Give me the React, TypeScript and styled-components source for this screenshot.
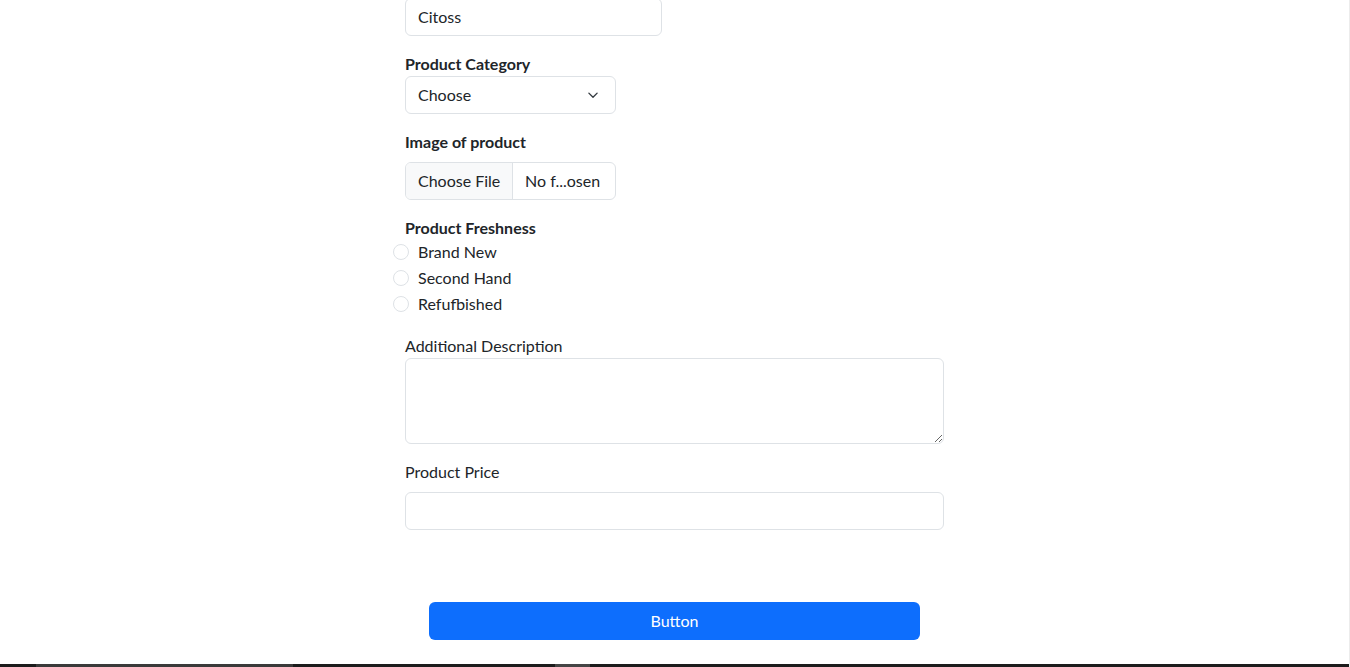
import React from "react";
import styled, { createGlobalStyle } from "styled-components";

const GlobalStyle = createGlobalStyle`
  html, body { margin: 0; padding: 0; height: 100%; background: #fff; }
  body {
    font-family: Lato, "Noto Sans", "Liberation Sans", sans-serif;
    font-size: 16px;
    line-height: 1.5;
    color: #212529;
    overflow: hidden;
  }
  *, *::before, *::after { box-sizing: border-box; }
`;

const Page = styled.div`
  height: 667px;
  display: flex;
  flex-direction: column;
  border-right: 1px solid #ececec;
  overflow: hidden;
`;

const Main = styled.main`
  flex: 1;
  display: flex;
  justify-content: center;
  overflow: hidden;
`;

const Form = styled.form`
  width: 539px;
  margin: -2px 0 0 0;
  display: flex;
  flex-direction: column;
`;

const Field = styled.div`
  display: flex;
  flex-direction: column;
  margin-bottom: 16px;
`;

const Label = styled.label<{ $bold?: boolean; $mb?: number }>`
  display: block;
  font-weight: ${(p) => (p.$bold ? 700 : 400)};
  line-height: 24px;
  margin-bottom: ${(p) => p.$mb ?? 0}px;
`;

const Control = styled.div<{ $width?: number; $height?: number }>`
  width: ${(p) => (p.$width ? `${p.$width}px` : "100%")};
  height: ${(p) => p.$height ?? 38}px;
  border: 1px solid #dee2e6;
  border-radius: 6px;
  background: #fff;
  padding: 6px 12px;
  line-height: 24px;
  display: flex;
  align-items: center;
`;

const SelectBox = styled(Control)`
  justify-content: space-between;
  padding-right: 14px;
`;

const TextArea = styled.textarea`
  display: block;
  width: 100%;
  height: 86px;
  border: 1px solid #dee2e6;
  border-radius: 6px;
  padding: 6px 12px;
  font: inherit;
  color: inherit;
  resize: vertical;
  outline: none;
`;

const FileBox = styled.div`
  width: 211px;
  height: 38px;
  border: 1px solid #dee2e6;
  border-radius: 6px;
  display: flex;
  overflow: hidden;
  line-height: 24px;
`;

const FileButton = styled.span`
  background: #f8f9fa;
  border-right: 1px solid #dee2e6;
  padding: 6px 12px;
  width: 107px;
  white-space: nowrap;
`;

const FileName = styled.span`
  padding: 6px 12px;
  white-space: nowrap;
`;

const RadioGroup = styled.div`
  display: flex;
  flex-direction: column;
  margin-left: -12px;
  margin-bottom: 16px;
`;

const RadioRow = styled.div`
  display: flex;
  align-items: center;
  height: 24px;
  margin-bottom: 2px;
`;

const RadioCircle = styled.span`
  width: 16px;
  height: 16px;
  border-radius: 50%;
  border: 1px solid #dee2e6;
  background: #fff;
  margin-right: 9px;
  flex-shrink: 0;
`;

const ButtonRow = styled.div`
  padding: 56px 24px 0;
`;

const PrimaryButton = styled.button`
  width: 100%;
  height: 38px;
  border: none;
  border-radius: 6px;
  background: #0d6efd;
  color: #fff;
  font: inherit;
  cursor: pointer;
`;

const Taskbar = styled.div`
  height: 3px;
  display: flex;
  background: #1c1c1c;
`;

const TaskSeg = styled.span<{ $w: number; $c: string }>`
  width: ${(p) => p.$w}px;
  background: ${(p) => p.$c};
  flex-shrink: 0;
`;

const Chevron = () => (
  <svg width="16" height="12" viewBox="0 0 16 16" fill="none">
    <path d="m2.5 5.5 5.5 5.5 5.5-5.5" stroke="#343a40" strokeWidth="1.8" strokeLinecap="round" strokeLinejoin="round" />
  </svg>
);

const radios = ["Brand New", "Second Hand", "Refufbished"];

export default function App() {
  return (
    <>
      <GlobalStyle />
      <Page>
        <Main>
          <Form onSubmit={(e) => e.preventDefault()}>
            <Field>
              <Control $width={257}>Citoss</Control>
            </Field>
            <Field>
              <Label $bold>Product Category</Label>
              <SelectBox $width={211}>
                <span>Choose</span>
                <Chevron />
              </SelectBox>
            </Field>
            <Field>
              <Label $bold $mb={8}>Image of product</Label>
              <FileBox>
                <FileButton>Choose File</FileButton>
                <FileName>No f...osen</FileName>
              </FileBox>
            </Field>
            <Label $bold>Product Freshness</Label>
            <RadioGroup>
              {radios.map((r) => (
                <RadioRow key={r}>
                  <RadioCircle />
                  <span>{r}</span>
                </RadioRow>
              ))}
            </RadioGroup>
            <Field>
              <Label>Additional Description</Label>
              <TextArea />
            </Field>
            <Field>
              <Label $mb={8}>Product Price</Label>
              <Control />
            </Field>
            <ButtonRow>
              <PrimaryButton type="button">Button</PrimaryButton>
            </ButtonRow>
          </Form>
        </Main>
        <Taskbar>
          <TaskSeg $w={36} $c="#1c1c1c" />
          <TaskSeg $w={257} $c="#3a3a3a" />
          <TaskSeg $w={262} $c="#1c1c1c" />
          <TaskSeg $w={35} $c="#454545" />
        </Taskbar>
      </Page>
    </>
  );
}
